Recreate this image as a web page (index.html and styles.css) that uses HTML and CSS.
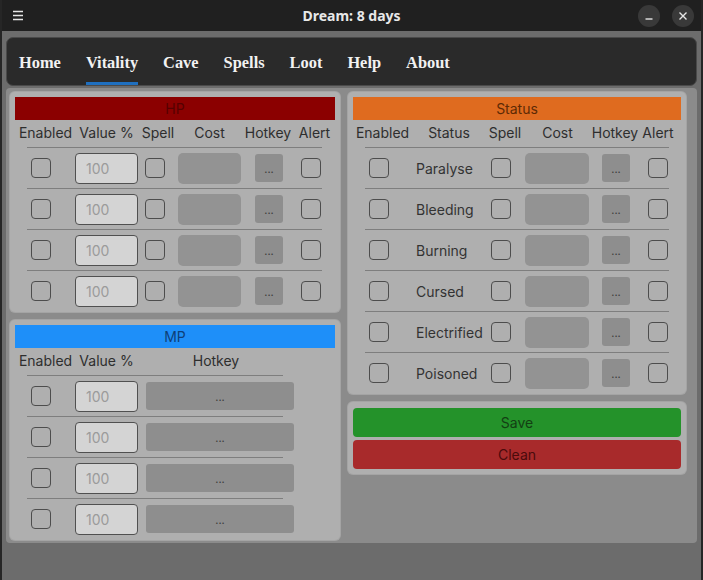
FILE: index.html
```html
<!DOCTYPE html>
<html lang="en">
<head>
  <meta charset="UTF-8" />
  <meta name="viewport" content="width=device-width, initial-scale=1.0"/>
  <title>Dream: 8 days</title>
  <link rel="stylesheet" href="styles.css">
</head>
<body>
  <div class="window">
    <!-- Title bar -->
    <header class="titlebar">
      <div class="menu-icon">
        <svg width="12" height="11" viewBox="0 0 12 11"><path d="M1 1.5h10M1 5.5h10M1 9.5h10" stroke="#e6e6e6" stroke-width="1.3"/></svg>
      </div>
      <div class="title">Dream: 8 days</div>
      <div class="win-buttons">
        <span class="win-btn"><svg width="10" height="10" viewBox="0 0 10 10"><path d="M1.5 8h7" stroke="#e6e6e6" stroke-width="1.4"/></svg></span>
        <span class="win-btn"><svg width="10" height="10" viewBox="0 0 10 10"><path d="M1.5 1.5l7 7M8.5 1.5l-7 7" stroke="#e6e6e6" stroke-width="1.4"/></svg></span>
      </div>
    </header>

    <div class="app">
      <!-- Tabs -->
      <nav class="tabs">
        <a href="#">Home</a>
        <a href="#" class="active">Vitality</a>
        <a href="#">Cave</a>
        <a href="#">Spells</a>
        <a href="#">Loot</a>
        <a href="#">Help</a>
        <a href="#">About</a>
      </nav>

      <div class="content">
        <div class="column">
          <!-- HP -->
          <section class="panel">
            <div class="panel-title hp">HP</div>
            <div class="labels hp-cols">
              <span>Enabled</span><span>Value %</span><span>Spell</span><span>Cost</span><span>Hotkey</span><span>Alert</span>
            </div>
            <div class="rows hp-rows">
              <div class="row hp-cols-row">
                <span class="check first"></span><span class="value">100</span><span class="check"></span><span class="cost"></span><span class="hotkey">...</span><span class="check"></span>
              </div>
              <div class="row hp-cols-row">
                <span class="check first"></span><span class="value">100</span><span class="check"></span><span class="cost"></span><span class="hotkey">...</span><span class="check"></span>
              </div>
              <div class="row hp-cols-row">
                <span class="check first"></span><span class="value">100</span><span class="check"></span><span class="cost"></span><span class="hotkey">...</span><span class="check"></span>
              </div>
              <div class="row hp-cols-row">
                <span class="check first"></span><span class="value">100</span><span class="check"></span><span class="cost"></span><span class="hotkey">...</span><span class="check"></span>
              </div>
            </div>
          </section>

          <!-- MP -->
          <section class="panel">
            <div class="panel-title mp">MP</div>
            <div class="labels mp-cols">
              <span>Enabled</span><span>Value %</span><span>Hotkey</span>
            </div>
            <div class="rows mp-rows">
              <div class="row mp-cols-row">
                <span class="check first"></span><span class="value">100</span><span class="hotkey wide">...</span>
              </div>
              <div class="row mp-cols-row">
                <span class="check first"></span><span class="value">100</span><span class="hotkey wide">...</span>
              </div>
              <div class="row mp-cols-row">
                <span class="check first"></span><span class="value">100</span><span class="hotkey wide">...</span>
              </div>
              <div class="row mp-cols-row">
                <span class="check first"></span><span class="value">100</span><span class="hotkey wide">...</span>
              </div>
            </div>
          </section>
        </div>

        <div class="column">
          <!-- Status -->
          <section class="panel">
            <div class="panel-title status">Status</div>
            <div class="labels st-cols">
              <span>Enabled</span><span>Status</span><span>Spell</span><span>Cost</span><span>Hotkey</span><span>Alert</span>
            </div>
            <div class="rows st-rows">
              <div class="row st-cols-row">
                <span class="check first"></span><span class="name">Paralyse</span><span class="check"></span><span class="cost st"></span><span class="hotkey">...</span><span class="check"></span>
              </div>
              <div class="row st-cols-row">
                <span class="check first"></span><span class="name">Bleeding</span><span class="check"></span><span class="cost st"></span><span class="hotkey">...</span><span class="check"></span>
              </div>
              <div class="row st-cols-row">
                <span class="check first"></span><span class="name">Burning</span><span class="check"></span><span class="cost st"></span><span class="hotkey">...</span><span class="check"></span>
              </div>
              <div class="row st-cols-row">
                <span class="check first"></span><span class="name">Cursed</span><span class="check"></span><span class="cost st"></span><span class="hotkey">...</span><span class="check"></span>
              </div>
              <div class="row st-cols-row">
                <span class="check first"></span><span class="name">Electrified</span><span class="check"></span><span class="cost st"></span><span class="hotkey">...</span><span class="check"></span>
              </div>
              <div class="row st-cols-row">
                <span class="check first"></span><span class="name">Poisoned</span><span class="check"></span><span class="cost st"></span><span class="hotkey">...</span><span class="check"></span>
              </div>
            </div>
          </section>

          <!-- Actions -->
          <section class="panel actions">
            <button class="btn save">Save</button>
            <button class="btn clean">Clean</button>
          </section>
        </div>
      </div>
    </div>
  </div>
</body>
</html>
```

FILE: styles.css
```css
/* Reset */
* {
  margin: 0;
  padding: 0;
  box-sizing: border-box;
}

body {
  background-color: #6c6c6c;
  font-family: 'Inter', 'Noto Sans', sans-serif;
  font-size: 14px;
  color: #2e2e2e;
}

.window {
  width: 703px;
  height: 580px;
  background-color: #6c6c6c;
  border-left: 2px solid #262626;
  border-right: 2px solid #262626;
  overflow: hidden;
}

/* Title bar */
.titlebar {
  height: 31px;
  background-color: #202020;
  display: grid;
  grid-template-columns: 1fr auto 1fr;
  align-items: center;
}

.menu-icon {
  padding-left: 10px;
  display: flex;
}

.title {
  font-family: 'Noto Sans', sans-serif;
  font-weight: 700;
  font-size: 14px;
  color: #e8e8e8;
}

.win-buttons {
  display: flex;
  justify-content: flex-end;
  gap: 12px;
  padding-right: 7px;
}

.win-btn {
  width: 22px;
  height: 22px;
  border-radius: 50%;
  background-color: #393939;
  display: flex;
  align-items: center;
  justify-content: center;
}

/* App area */
.app {
  padding: 6px 4px 0 4px;
}

.tabs {
  height: 49px;
  background-color: #2a2a2a;
  border: 1px solid #4a4a4a;
  border-radius: 7px;
  display: flex;
  gap: 25px;
  padding-left: 12px;
}

.tabs a {
  font-family: 'Liberation Serif', serif;
  font-weight: 700;
  font-size: 16.4px;
  color: #f2f2f2;
  text-decoration: none;
  display: flex;
  align-items: center;
  border-bottom: 3px solid transparent;
  padding-top: 6px;
}

.tabs a.active {
  border-bottom-color: #1f6fbf;
}

.content {
  margin-top: 2px;
  height: 455px;
  background-color: #8b8b8b;
  border-radius: 4px;
  padding: 4px;
  display: grid;
  grid-template-columns: 330px 338px;
  gap: 8px;
  align-items: start;
}

.column {
  display: flex;
  flex-direction: column;
  gap: 8px;
}

/* Panels */
.panel {
  background-color: #afafaf;
  border-radius: 5px;
  padding: 5px 5px 1px;
  box-shadow: 0 0 0 1px #a4a4a4;
}

.panel-title {
  height: 23px;
  line-height: 23px;
  text-align: center;
}

.panel-title.hp {
  background-color: #8b0000;
  color: #560000;
}

.panel-title.mp {
  background-color: #1e8ff9;
  color: #0e3f78;
}

.panel-title.status {
  background-color: #df6b1f;
  color: #5e2a05;
}

.labels {
  height: 27px;
  display: grid;
  align-items: center;
  justify-items: center;
  padding-bottom: 2px;
  white-space: nowrap;
}

.hp-cols { grid-template-columns: 61px 61px 42px 61px 56px 37px; }
.mp-cols { grid-template-columns: 61px 61px 158px; }
.st-cols { grid-template-columns: 59px 74px 38px 67px 48px 38px; }

.rows {
  margin-left: 12px;
}

.hp-rows { width: 295px; }
.mp-rows { width: 256px; }
.st-rows { width: 304px; }

.row {
  height: 41px;
  border-top: 1px solid #7e7e7e;
  display: grid;
  align-items: center;
  justify-items: start;
}

.hp-cols-row { grid-template-columns: 48px 70px 33px 77px 46px 21px; }
.mp-cols-row { grid-template-columns: 48px 71px 148px; }
.st-cols-row { grid-template-columns: 51px 75px 34px 77px 46px 21px; }

/* Controls */
.check {
  width: 20px;
  height: 20px;
  border: 1px solid #4d4d4d;
  border-radius: 4px;
}

.check.first {
  margin-left: 4px;
}

.value {
  width: 63px;
  height: 31px;
  background-color: #d4d4d4;
  border: 1px solid #505050;
  border-radius: 4px;
  color: #9b9b9b;
  line-height: 29px;
  padding-left: 10px;
}

.name {
  color: #333;
}

.cost {
  width: 63px;
  height: 31px;
  background-color: #939393;
  border-radius: 5px;
}

.cost.st {
  width: 64px;
}

.hotkey {
  width: 28px;
  height: 28px;
  background-color: #8e8e8e;
  border-radius: 3px;
  font-size: 11px;
  color: #3a3a3a;
  text-align: center;
  line-height: 30px;
}

.hotkey.wide {
  width: 148px;
}

/* Action buttons */
.actions {
  padding: 6px 5px 5px;
  display: flex;
  flex-direction: column;
  gap: 3px;
}

.btn {
  height: 29px;
  border: none;
  border-radius: 4px;
  font-family: 'Inter', 'Noto Sans', sans-serif;
  font-size: 14px;
}

.btn.save {
  background-color: #24922a;
  color: #133f13;
}

.btn.clean {
  background-color: #a82a2b;
  color: #4b0b0b;
}
```
